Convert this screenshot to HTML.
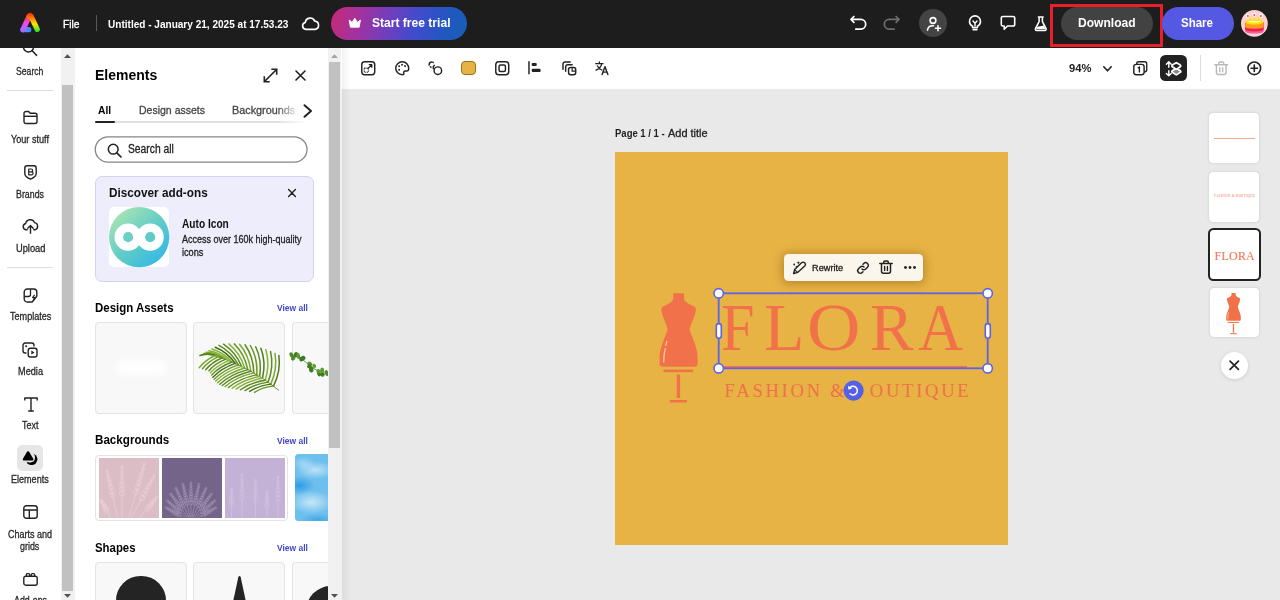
<!DOCTYPE html>
<html><head><meta charset="utf-8"><title>Adobe Express</title>
<style>
*{box-sizing:border-box;margin:0;padding:0}
html,body{width:1280px;height:600px;overflow:hidden;background:#e9e9e9;font-family:"Liberation Sans",sans-serif;color:#222}
.a{position:absolute}
.tx{position:absolute;white-space:nowrap;transform-origin:0 0;display:block}
svg{position:absolute;overflow:visible}
</style></head><body>
<!-- HEADER -->
<div class="a" style="left:0;top:0;width:1280px;height:47.500px;background:#1d1d1d"></div>
<svg style="left:14px;top:6px" width="32" height="32" viewBox="14 6 32 32">
  <defs>
    <linearGradient id="lgL" gradientUnits="userSpaceOnUse" x1="0" y1="31" x2="0" y2="13"><stop offset="0" stop-color="#9a6bff"/><stop offset="0.45" stop-color="#f548f0"/><stop offset="0.8" stop-color="#ff3a3a"/><stop offset="1" stop-color="#ff2200"/></linearGradient>
    <linearGradient id="lgR" gradientUnits="userSpaceOnUse" x1="0" y1="13" x2="0" y2="32"><stop offset="0" stop-color="#ff2200"/><stop offset="0.3" stop-color="#ff8a00"/><stop offset="0.58" stop-color="#ffe600"/><stop offset="0.82" stop-color="#7ae621"/><stop offset="1" stop-color="#22e03a"/></linearGradient>
    <linearGradient id="lgB" gradientUnits="userSpaceOnUse" x1="20" y1="0" x2="31.500" y2="0"><stop offset="0" stop-color="#9a6bff"/><stop offset="0.6" stop-color="#4f8cff"/><stop offset="1" stop-color="#3d8bff"/></linearGradient>
  </defs>
  <path d="M23 29.700H28.700" fill="none" stroke="url(#lgB)" stroke-width="5.300" stroke-linecap="round"/>
  <path d="M23 29.700L29.200 16.200" fill="none" stroke="url(#lgL)" stroke-width="5.300" stroke-linecap="round"/>
  <path d="M23 29.700L24.200 27.100" fill="none" stroke="#9a6bff" stroke-width="5.300" stroke-linecap="round" opacity=".0"/>
  <path d="M29.200 16.200Q30.100 14.800 31 16.200L37.200 29.400" fill="none" stroke="url(#lgR)" stroke-width="5.300" stroke-linecap="round" stroke-linejoin="round"/>
</svg>
<div class="a" style="left:96px;top:15px;width:1px;height:16px;background:#595959"></div>
<svg style="left:300.800px;top:14.800px" width="19" height="17" viewBox="0 0 20 18"><path d="M5.200 15.200a3.700 3.700 0 0 1-.7-7.300 5.200 5.200 0 0 1 10-1.400 4.400 4.400 0 0 1 .5 8.700z" fill="none" stroke="#fff" stroke-width="1.700" stroke-linejoin="round"/></svg>
<div class="a" style="left:331px;top:6.500px;width:135.500px;height:33.300px;border-radius:17px;background:linear-gradient(105deg,#c82a74 0%,#a232a0 22%,#6a40c0 45%,#3f4ccc 62%,#2356c0 82%,#1660b6 100%)"></div>
<svg style="left:348.300px;top:17.200px" width="13.600" height="11.600" viewBox="0 0 14 12"><path d="M1.200 3.200L4.300 5.600 7 1.200 9.700 5.600 12.800 3.200 11.500 10.500H2.500Z" fill="#fff" stroke="#fff" stroke-width="1" stroke-linejoin="round"/></svg>
<!-- undo/redo -->
<svg style="left:849px;top:14px" width="18" height="18" viewBox="0 0 18 18"><path d="M4.900 2.500L2 5.400 4.900 8.300M2.300 5.400H11.800a4.900 4.900 0 0 1 0 9.800H6.800" fill="none" stroke="#fff" stroke-width="1.700" stroke-linecap="round" stroke-linejoin="round"/></svg>
<svg style="left:882.500px;top:14px" width="18" height="18" viewBox="0 0 18 18"><path d="M13.100 2.500L16 5.400 13.100 8.300M15.700 5.400H6.200a4.900 4.900 0 0 0 0 9.800H11.200" fill="none" stroke="#6e6e6e" stroke-width="1.700" stroke-linecap="round" stroke-linejoin="round"/></svg>
<div class="a" style="left:919px;top:9.200px;width:27.800px;height:27.800px;border-radius:14px;background:#444"></div>
<svg style="left:926px;top:15.500px" width="16" height="16" viewBox="0 0 16 16"><circle cx="7" cy="4.500" r="2.900" fill="none" stroke="#fff" stroke-width="1.600"/><path d="M1.500 14.200c.3-2.800 2.400-4.400 5.200-4.400h.8" fill="none" stroke="#fff" stroke-width="1.600" stroke-linecap="round"/><path d="M12 9.800v5M9.500 12.300h5" stroke="#fff" stroke-width="1.600" stroke-linecap="round"/></svg>
<svg style="left:968px;top:15px" width="14" height="16" viewBox="0 0 14 16"><path d="M4.600 11.200C2.800 10.200 1.500 8.600 1.500 6.400a5.500 5.500 0 0 1 11 0c0 2.200-1.300 3.800-3.100 4.800v1.600H4.600z" fill="none" stroke="#fff" stroke-width="1.600" stroke-linejoin="round"/><path d="M5 14.700h4M5 6l2 2.200L9 6M7 8.200v3" fill="none" stroke="#fff" stroke-width="1.400" stroke-linecap="round" stroke-linejoin="round"/></svg>
<svg style="left:1000px;top:14.800px" width="16" height="16" viewBox="0 0 16 16"><path d="M2.800 1.500h10.400a1.500 1.500 0 0 1 1.500 1.500v6.500a1.500 1.500 0 0 1-1.500 1.500H7.500L4.200 14.300V11H2.800a1.500 1.500 0 0 1-1.500-1.500V3a1.500 1.500 0 0 1 1.500-1.500z" fill="none" stroke="#fff" stroke-width="1.600" stroke-linejoin="round"/></svg>
<svg style="left:1034.300px;top:15.500px" width="13.500" height="15.400" viewBox="0 0 14 16"><path d="M4.500 1h5M5.300 1.300v4.500L1.500 13.200c-.4.900.2 1.800 1.100 1.800h8.800c.9 0 1.500-.9 1.100-1.800L8.700 5.800V1.300" fill="none" stroke="#fff" stroke-width="1.600" stroke-linecap="round" stroke-linejoin="round"/><path d="M3.600 11.300l6.600-1.400 1.600 3.900H2.200z" fill="#fff"/></svg>
<!-- download / share -->
<div class="a" style="left:1050px;top:3.500px;width:112.500px;height:43px;border:3px solid #e6202a"></div>
<div class="a" style="left:1061px;top:7px;width:92px;height:33px;border-radius:17px;background:#424242"></div>
<div class="a" style="left:1162px;top:7px;width:72px;height:33px;border-radius:17px;background:#5558e3"></div>
<svg style="left:1240.800px;top:9.900px" width="26.800" height="26.800" viewBox="0 0 26.800 26.800">
  <defs><clipPath id="av"><circle cx="13.400" cy="13.400" r="13.400"/></clipPath></defs>
  <g clip-path="url(#av)"><rect width="27" height="27" fill="#ffd0d0"/>
  <path d="M4.200 12v9.200q0 2.300 9.200 2.300t9.200-2.300V12z" fill="#f95fa0"/>
  <path d="M4.200 12v7.300q0 2.200 9.200 2.200t9.200-2.200V12z" fill="#ef2050"/>
  <path d="M4.200 12v4.600q0 2.200 9.200 2.200t9.200-2.200V12z" fill="#ff9a1f"/>
  <ellipse cx="13.400" cy="12" rx="9.200" ry="2.800" fill="#ffdf10"/>
  <ellipse cx="13.400" cy="11.600" rx="6.500" ry="1" fill="#fff8b0"/>
  <rect x="8.300" y="6" width="1.500" height="5" rx=".700" fill="#ffdf10"/><rect x="12.600" y="6" width="1.500" height="5" rx=".700" fill="#ffdf10"/><rect x="17" y="6" width="1.500" height="5" rx=".700" fill="#ffdf10"/>
  <circle cx="6.700" cy="5.800" r="2" fill="#fff"/><circle cx="13.300" cy="4.800" r="2" fill="#fff"/><circle cx="20" cy="5.800" r="2" fill="#fff"/>
  <circle cx="6.900" cy="5.900" r="1" fill="#f03878"/><circle cx="13.300" cy="4.900" r="1" fill="#f03878"/><circle cx="19.800" cy="5.900" r="1" fill="#f03878"/></g>
</svg>
<!-- RAIL -->
<div class="a" style="left:0;top:48px;width:61px;height:552px;background:#fff"></div>
<div class="a" style="left:7px;top:90px;width:46px;height:1px;background:#dcdcdc"></div>
<div class="a" style="left:7px;top:266.500px;width:46px;height:1px;background:#dcdcdc"></div>
<div class="a" style="left:17px;top:445px;width:26px;height:26px;border-radius:5.500px;background:#e6e6e6"></div>
<!-- rail icons -->
<div class="a" style="left:0;top:47.500px;width:61px;height:20px;overflow:hidden"><svg style="left:22px;top:-8px" width="16" height="18" viewBox="0 0 16 18"><circle cx="6.500" cy="7" r="5" fill="none" stroke="#222" stroke-width="1.500"/><path d="M10.200 10.800L14.500 15.300" stroke="#222" stroke-width="1.600" stroke-linecap="round"/></svg></div>
<svg style="left:23px;top:110px" width="15" height="15" viewBox="0 0 15 15"><path d="M1 3.500a2 2 0 0 1 2-2h2.600l1.600 1.800H12a2 2 0 0 1 2 2v6.200a2 2 0 0 1-2 2H3a2 2 0 0 1-2-2z" fill="none" stroke="#222" stroke-width="1.400" stroke-linejoin="round"/><path d="M1 6.300h13" stroke="#222" stroke-width="1.400"/></svg>
<svg style="left:23.500px;top:165px" width="13" height="15" viewBox="0 0 13 15"><path d="M3 .800h7a2.200 2.200 0 0 1 2.200 2.200v5.600c0 2.700-2.400 4.300-5.700 5.600C3.200 12.900.800 11.300.800 8.600V3A2.200 2.200 0 0 1 3 .800z" fill="none" stroke="#222" stroke-width="1.400" stroke-linejoin="round"/><path d="M4.700 4h2.500a1.400 1.400 0 0 1 0 2.800H4.700zM4.700 6.800h2.900a1.500 1.500 0 0 1 0 3H4.700z" fill="none" stroke="#222" stroke-width="1.200" stroke-linejoin="round"/></svg>
<svg style="left:22px;top:219px" width="17" height="15" viewBox="0 0 17 15"><path d="M5.200 10.800H4.200A3.200 3.200 0 0 1 3.700 4.500 4.600 4.600 0 0 1 12.500 3.600 3.700 3.700 0 0 1 13 10.800H11.800" fill="none" stroke="#222" stroke-width="1.400" stroke-linecap="round" stroke-linejoin="round"/><path d="M8.500 14.200V6.800M5.800 9.200L8.500 6.500 11.200 9.200" fill="none" stroke="#222" stroke-width="1.400" stroke-linecap="round" stroke-linejoin="round"/></svg>
<svg style="left:22.500px;top:287.500px" width="15" height="15" viewBox="0 0 15 15"><path d="M4.200 1h6.600a3 3 0 0 1 3 3v4.200L9.200 14H4.200a3 3 0 0 1-3-3V4a3 3 0 0 1 3-3z" fill="none" stroke="#222" stroke-width="1.400" stroke-linejoin="round"/><path d="M1.300 8.500h4.200a2 2 0 0 0 2-2V1.200" fill="none" stroke="#222" stroke-width="1.300"/><path d="M11.600 6.800l-2 2.800h2.200l-1.600 3" fill="none" stroke="#222" stroke-width="1.200" stroke-linejoin="round"/></svg>
<svg style="left:22px;top:341.500px" width="16" height="16" viewBox="0 0 16 16"><path d="M4 11H3.200A2.200 2.200 0 0 1 1 8.800V3.200A2.200 2.200 0 0 1 3.200 1h6.600A2.200 2.200 0 0 1 12 3.200V4" fill="none" stroke="#222" stroke-width="1.400" stroke-linecap="round"/><circle cx="4.200" cy="4.200" r="1" fill="#222"/><rect x="6.200" y="6.200" width="8.800" height="8.800" rx="2.200" fill="#fff" stroke="#222" stroke-width="1.400"/><path d="M9.300 8.600v4l3.200-2z" fill="#222"/></svg>
<svg style="left:23.500px;top:396.500px" width="14" height="15" viewBox="0 0 14 15"><path d="M.800 3.500V1h12.400v2.500M7 1v13M4.200 14h5.600" fill="none" stroke="#222" stroke-width="1.400" stroke-linejoin="round"/></svg>
<svg style="left:17px;top:445px" width="26" height="26" viewBox="17 445 26 26"><circle cx="31.600" cy="459.300" r="5.800" fill="#000"/><circle cx="29.700" cy="457.200" r="5.300" fill="#e6e6e6"/><path d="M28.100 452.400L24 459.400H32.200Z" fill="#e6e6e6" stroke="#e6e6e6" stroke-width="4.800" stroke-linejoin="round"/><path d="M28.100 452.400L24 459.400H32.200Z" fill="#000" stroke="#000" stroke-width="2.400" stroke-linejoin="round"/></svg>
<svg style="left:23px;top:505px" width="15" height="14" viewBox="0 0 15 14"><rect x=".800" y=".700" width="13.400" height="12.600" rx="2.600" fill="none" stroke="#222" stroke-width="1.400"/><path d="M.800 5h13.400M6.300 5v8.300" stroke="#222" stroke-width="1.400"/></svg>
<svg style="left:23px;top:573px" width="15" height="13" viewBox="0 0 15 13"><path d="M2.800 3.200h9.400a2 2 0 0 1 2 2v5a2 2 0 0 1-2 2H2.800a2 2 0 0 1-2-2v-5a2 2 0 0 1 2-2z" fill="none" stroke="#222" stroke-width="1.400"/><path d="M3.300 3V1.700a1 1 0 0 1 1-1h1.400a1 1 0 0 1 1 1V3M8.300 3V1.700a1 1 0 0 1 1-1h1.400a1 1 0 0 1 1 1V3" fill="none" stroke="#222" stroke-width="1.300"/></svg>
<!-- rail scrollbar -->
<div class="a" style="left:61px;top:48px;width:13.500px;height:552px;background:#f1f1f1"></div>
<div class="a" style="left:62px;top:85px;width:11px;height:506px;background:#c1c1c1"></div>
<svg style="left:64px;top:54px" width="7" height="4" viewBox="0 0 7 4"><path d="M0 4L3.500 .300 7 4z" fill="#505050"/></svg>
<svg style="left:64px;top:593.500px" width="7" height="4" viewBox="0 0 7 4"><path d="M0 0L3.500 3.700 7 0z" fill="#505050"/></svg>
<!-- PANEL -->
<div class="a" style="left:74.500px;top:47.500px;width:254px;height:553px;background:#fff"></div>
<svg style="left:263px;top:67.500px" width="15" height="15" viewBox="0 0 15 15"><path d="M1.500 13.500L13.500 1.500M8.300 1.300h5.400v5.400M6.700 13.700H1.300V8.300" fill="none" stroke="#222" stroke-width="1.600" stroke-linejoin="miter"/></svg>
<svg style="left:295px;top:70px" width="11" height="11" viewBox="0 0 11 11"><path d="M1 1l9 9M10 1l-9 9" stroke="#222" stroke-width="1.600" stroke-linecap="round"/></svg>
<div class="a" style="left:95px;top:121.300px;width:212px;height:2px;background:linear-gradient(90deg,#e0e0e0 0%,#e0e0e0 85%,rgba(224,224,224,0) 100%)"></div>
<div class="a" style="left:94.700px;top:120.800px;width:20px;height:2.200px;background:#222;border-radius:1px"></div>
<div class="a" style="left:276px;top:100px;width:26px;height:20px;z-index:3;background:linear-gradient(90deg,rgba(255,255,255,0),rgba(255,255,255,.95) 85%)"></div>
<svg style="left:303px;top:104px" width="10" height="14" viewBox="0 0 10 14"><path d="M1.500 1.200L8 7 1.500 12.800" fill="none" stroke="#222" stroke-width="2" stroke-linecap="round" stroke-linejoin="round"/></svg>
<svg style="left:0;top:0" width="340" height="200" viewBox="0 0 340 200"><rect x="95.300" y="136.800" width="211.700" height="25.300" rx="12.650" fill="#fff" stroke="#858585" stroke-width="1.300"/></svg>
<svg style="left:107px;top:142.500px" width="15" height="15" viewBox="0 0 15 15"><circle cx="6.200" cy="6.200" r="4.900" fill="none" stroke="#222" stroke-width="1.500"/><path d="M9.800 9.800L14 14" stroke="#222" stroke-width="1.700" stroke-linecap="round"/></svg>
<!-- discover card -->
<div class="a" style="left:94.800px;top:176px;width:219.500px;height:105.500px;border:1px solid #d3d3fa;border-radius:7px;background:#ededfc"></div>
<svg style="left:288px;top:188.500px" width="8" height="8" viewBox="0 0 8 8"><path d="M.600 .600l6.800 6.800M7.400 .600L.600 7.400" stroke="#222" stroke-width="1.400" stroke-linecap="round"/></svg>
<div class="a" style="left:108.700px;top:207.200px;width:60.300px;height:60.300px;border-radius:5px;background:#fff"></div>
<svg style="left:108.700px;top:207.200px" width="60.300" height="60.300" viewBox="0 0 60 60">
  <defs><linearGradient id="ai" x1="0.150" y1="0.100" x2="0.850" y2="0.900"><stop offset="0" stop-color="#a6e3b4"/><stop offset="0.5" stop-color="#63cdc6"/><stop offset="1" stop-color="#35b9e4"/></linearGradient></defs>
  <circle cx="30" cy="30" r="30" fill="url(#ai)"/>
  <circle cx="19" cy="30" r="13.500" fill="#fff"/><circle cx="41" cy="30" r="13.500" fill="#fff"/>
  <circle cx="19" cy="30" r="5" fill="#6dd0c4"/><circle cx="41" cy="30" r="5" fill="#5ecbc8"/>
</svg>
<!-- design assets -->
<div class="a" style="left:94.800px;top:322px;width:92px;height:91.500px;border:1px solid #e3e3e3;border-radius:4px;background:#f8f8f8"></div>
<div class="a" style="left:116px;top:361px;width:50px;height:13px;border-radius:6px;background:#fff;filter:blur(3px);opacity:.9"></div>
<div class="a" style="left:193.300px;top:322px;width:91.600px;height:91.500px;border:1px solid #e3e3e3;border-radius:4px;background:#f8f8f8"></div>
<div class="a" style="left:291.500px;top:322px;width:37px;height:91.500px;border:1px solid #e3e3e3;border-right:none;border-radius:4px 0 0 4px;background:#f8f8f8"></div>
<svg style="left:0;top:0" width="340" height="600" viewBox="0 0 340 600">
<path d="M279.0 390.5 Q252 368 215 355.5" fill="none" stroke="#7a9a2a" stroke-width="1"/>
<path d="M273.5 386.1 Q281.0 370.8 278.9 355.6" fill="none" stroke="#4f7d1a" stroke-width="1.500" stroke-linecap="round"/>
<path d="M273.5 386.1 Q262.5 387.1 254.5 392.3" fill="none" stroke="#6b9a24" stroke-width="1.400" stroke-linecap="round"/>
<path d="M270.8 384.1 Q277.7 368.6 275.0 353.6" fill="none" stroke="#7aa82e" stroke-width="1.500" stroke-linecap="round"/>
<path d="M270.8 384.1 Q258.6 385.5 249.7 391.4" fill="none" stroke="#3f6d14" stroke-width="1.400" stroke-linecap="round"/>
<path d="M268.1 382.1 Q274.0 366.4 270.6 351.6" fill="none" stroke="#5b8a1f" stroke-width="1.500" stroke-linecap="round"/>
<path d="M268.1 382.1 Q254.7 383.9 245.0 390.6" fill="none" stroke="#5b8a1f" stroke-width="1.400" stroke-linecap="round"/>
<path d="M265.3 380.2 Q270.2 364.2 265.8 349.8" fill="none" stroke="#88b23a" stroke-width="1.500" stroke-linecap="round"/>
<path d="M265.3 380.2 Q250.8 382.4 240.4 389.8" fill="none" stroke="#5b8a1f" stroke-width="1.400" stroke-linecap="round"/>
<path d="M262.5 378.3 Q266.2 362.1 260.9 348.2" fill="none" stroke="#4f7d1a" stroke-width="1.500" stroke-linecap="round"/>
<path d="M262.5 378.3 Q247.0 380.9 236.1 389.1" fill="none" stroke="#88b23a" stroke-width="1.400" stroke-linecap="round"/>
<path d="M259.7 376.5 Q262.1 360.2 255.7 346.8" fill="none" stroke="#5b8a1f" stroke-width="1.500" stroke-linecap="round"/>
<path d="M259.7 376.5 Q243.4 379.5 232.1 388.3" fill="none" stroke="#88b23a" stroke-width="1.400" stroke-linecap="round"/>
<path d="M256.8 374.7 Q257.8 358.4 250.4 345.6" fill="none" stroke="#6b9a24" stroke-width="1.500" stroke-linecap="round"/>
<path d="M256.8 374.7 Q240.0 378.2 228.4 387.5" fill="none" stroke="#5b8a1f" stroke-width="1.400" stroke-linecap="round"/>
<path d="M253.8 372.9 Q253.5 356.7 245.0 344.8" fill="none" stroke="#5b8a1f" stroke-width="1.500" stroke-linecap="round"/>
<path d="M253.8 372.9 Q236.8 376.8 225.1 386.6" fill="none" stroke="#7aa82e" stroke-width="1.400" stroke-linecap="round"/>
<path d="M250.8 371.2 Q249.0 355.2 239.6 344.2" fill="none" stroke="#7aa82e" stroke-width="1.500" stroke-linecap="round"/>
<path d="M250.8 371.2 Q233.8 375.4 222.2 385.5" fill="none" stroke="#5b8a1f" stroke-width="1.400" stroke-linecap="round"/>
<path d="M247.8 369.6 Q244.5 353.9 234.2 343.9" fill="none" stroke="#6b9a24" stroke-width="1.500" stroke-linecap="round"/>
<path d="M247.8 369.6 Q230.9 374.1 219.7 384.2" fill="none" stroke="#5b8a1f" stroke-width="1.400" stroke-linecap="round"/>
<path d="M244.7 368.0 Q240.0 352.8 228.8 343.9" fill="none" stroke="#88b23a" stroke-width="1.500" stroke-linecap="round"/>
<path d="M244.7 368.0 Q228.3 372.7 217.5 382.8" fill="none" stroke="#7aa82e" stroke-width="1.400" stroke-linecap="round"/>
<path d="M241.6 366.4 Q235.4 351.9 223.5 344.2" fill="none" stroke="#5b8a1f" stroke-width="1.500" stroke-linecap="round"/>
<path d="M241.6 366.4 Q225.9 371.2 215.7 381.1" fill="none" stroke="#88b23a" stroke-width="1.400" stroke-linecap="round"/>
<path d="M238.4 364.9 Q231.1 351.6 219.0 345.4" fill="none" stroke="#5b8a1f" stroke-width="1.500" stroke-linecap="round"/>
<path d="M238.4 364.9 Q223.7 369.7 214.1 379.3" fill="none" stroke="#6b9a24" stroke-width="1.400" stroke-linecap="round"/>
<path d="M235.2 363.4 Q227.1 351.8 215.2 347.2" fill="none" stroke="#3f6d14" stroke-width="1.500" stroke-linecap="round"/>
<path d="M235.2 363.4 Q221.5 368.2 212.8 377.3" fill="none" stroke="#3f6d14" stroke-width="1.400" stroke-linecap="round"/>
<path d="M232.0 362.0 Q223.3 352.1 211.8 349.0" fill="none" stroke="#88b23a" stroke-width="1.500" stroke-linecap="round"/>
<path d="M232.0 362.0 Q219.4 366.6 211.6 375.1" fill="none" stroke="#5b8a1f" stroke-width="1.400" stroke-linecap="round"/>
<path d="M228.7 360.6 Q219.7 352.4 208.8 350.7" fill="none" stroke="#88b23a" stroke-width="1.500" stroke-linecap="round"/>
<path d="M228.7 360.6 Q217.4 365.0 210.4 372.8" fill="none" stroke="#88b23a" stroke-width="1.400" stroke-linecap="round"/>
<path d="M225.3 359.3 Q216.3 352.7 206.2 352.3" fill="none" stroke="#7aa82e" stroke-width="1.500" stroke-linecap="round"/>
<path d="M225.3 359.3 Q215.1 363.4 208.9 370.7" fill="none" stroke="#5b8a1f" stroke-width="1.400" stroke-linecap="round"/>
<path d="M221.9 358.0 Q213.0 352.9 203.9 353.6" fill="none" stroke="#6b9a24" stroke-width="1.500" stroke-linecap="round"/>
<path d="M221.9 358.0 Q211.8 362.3 205.7 369.7" fill="none" stroke="#5b8a1f" stroke-width="1.400" stroke-linecap="round"/>
<path d="M218.5 356.7 Q210.0 353.1 201.8 354.7" fill="none" stroke="#88b23a" stroke-width="1.500" stroke-linecap="round"/>
<path d="M218.5 356.7 Q208.5 361.2 202.5 368.7" fill="none" stroke="#6b9a24" stroke-width="1.400" stroke-linecap="round"/>
<path d="M215.0 355.5 Q207.1 353.2 200.0 355.5" fill="none" stroke="#4f7d1a" stroke-width="1.500" stroke-linecap="round"/>
<path d="M215.0 355.5 Q205.1 360.2 199.2 367.8" fill="none" stroke="#7aa82e" stroke-width="1.400" stroke-linecap="round"/>
</svg>
<svg style="left:0;top:0" width="328.500" height="600" viewBox="0 0 328.500 600">
<path d="M293 357 L298 356 L303 360 L308 364 L313 368 L318 371 L323 372 L328 372" fill="none" stroke="#4d7d2a" stroke-width=".800"/>
<ellipse cx="291.6" cy="355.1" rx="1.9" ry="3.0" fill="#4f8a2c" transform="rotate(-27 291.6 355.1)"/>
<ellipse cx="293.3" cy="358.0" rx="2.0" ry="2.7" fill="#4f8a2c" transform="rotate(32 293.3 358.0)"/>
<ellipse cx="296.2" cy="354.6" rx="2.3" ry="2.5" fill="#3f7a24" transform="rotate(19 296.2 354.6)"/>
<ellipse cx="298.3" cy="356.0" rx="1.9" ry="3.0" fill="#5f9a34" transform="rotate(-9 298.3 356.0)"/>
<ellipse cx="301.3" cy="359.2" rx="2.1" ry="2.4" fill="#3f7a24" transform="rotate(-4 301.3 359.2)"/>
<ellipse cx="303.4" cy="357.9" rx="2.1" ry="2.2" fill="#3f7a24" transform="rotate(-21 303.4 357.9)"/>
<ellipse cx="309.7" cy="363.8" rx="2.6" ry="2.1" fill="#5f9a34" transform="rotate(33 309.7 363.8)"/>
<ellipse cx="309.2" cy="366.0" rx="1.9" ry="2.4" fill="#3f7a24" transform="rotate(34 309.2 366.0)"/>
<ellipse cx="314.2" cy="365.9" rx="1.7" ry="2.3" fill="#5f9a34" transform="rotate(-32 314.2 365.9)"/>
<ellipse cx="311.2" cy="369.4" rx="2.2" ry="3.2" fill="#3f7a24" transform="rotate(-4 311.2 369.4)"/>
<ellipse cx="318.9" cy="373.4" rx="1.9" ry="3.1" fill="#3f7a24" transform="rotate(-19 318.9 373.4)"/>
<ellipse cx="318.4" cy="371.2" rx="1.8" ry="2.3" fill="#5f9a34" transform="rotate(-9 318.4 371.2)"/>
<ellipse cx="322.6" cy="374.5" rx="2.1" ry="2.2" fill="#3f7a24" transform="rotate(30 322.6 374.5)"/>
<ellipse cx="322.1" cy="370.3" rx="2.0" ry="2.7" fill="#5f9a34" transform="rotate(13 322.1 370.3)"/>
<ellipse cx="329.9" cy="373.3" rx="2.0" ry="2.3" fill="#4f8a2c" transform="rotate(-18 329.9 373.3)"/>
<ellipse cx="326.6" cy="373.1" rx="1.6" ry="3.0" fill="#4f8a2c" transform="rotate(-7 326.6 373.1)"/>
</svg>
<!-- backgrounds -->
<div class="a" style="left:94.800px;top:454.700px;width:193.400px;height:66px;border:1px solid #e3e3e3;border-radius:4px;background:#fff"></div>
<div class="a" style="left:98.500px;top:458px;width:60.200px;height:59.500px;background:#dbbec5"></div>
<div class="a" style="left:161.500px;top:458px;width:60.200px;height:59.500px;background:#75648a"></div>
<div class="a" style="left:224.700px;top:458px;width:60.200px;height:59.500px;background:#c4b2d6"></div>
<svg style="left:0;top:0" width="340" height="600" viewBox="0 0 340 600">
<defs><clipPath id="c1"><rect x="98.500" y="458" width="60.200" height="59.500"/></clipPath><clipPath id="c2"><rect x="161.500" y="458" width="60.200" height="59.500"/></clipPath><clipPath id="c3"><rect x="224.700" y="458" width="60.200" height="59.500"/></clipPath></defs>
<g clip-path="url(#c1)">
<path d="M118.0 520.0 L107.0 471.0" stroke="#ecd5da" stroke-width=".700" opacity="0.9"/><circle cx="107.0" cy="471.0" r="1.3" fill="none" stroke="#ecd5da" stroke-width=".600" opacity="0.9"/><circle cx="107.9" cy="475.1" r="1.5" fill="none" stroke="#ecd5da" stroke-width=".600" opacity="0.9"/><circle cx="108.8" cy="479.2" r="1.8" fill="none" stroke="#ecd5da" stroke-width=".600" opacity="0.9"/><circle cx="109.8" cy="483.2" r="2.0" fill="none" stroke="#ecd5da" stroke-width=".600" opacity="0.9"/><circle cx="110.7" cy="487.3" r="2.2" fill="none" stroke="#ecd5da" stroke-width=".600" opacity="0.9"/><circle cx="111.6" cy="491.4" r="2.4" fill="none" stroke="#ecd5da" stroke-width=".600" opacity="0.9"/><circle cx="112.5" cy="495.5" r="2.6" fill="none" stroke="#ecd5da" stroke-width=".600" opacity="0.9"/>
<path d="M122.0 520.0 L122.0 467.0" stroke="#ecd5da" stroke-width=".700" opacity="0.9"/><circle cx="122.0" cy="467.0" r="1.3" fill="none" stroke="#ecd5da" stroke-width=".600" opacity="0.9"/><circle cx="122.0" cy="471.4" r="1.5" fill="none" stroke="#ecd5da" stroke-width=".600" opacity="0.9"/><circle cx="122.0" cy="475.8" r="1.8" fill="none" stroke="#ecd5da" stroke-width=".600" opacity="0.9"/><circle cx="122.0" cy="480.2" r="2.0" fill="none" stroke="#ecd5da" stroke-width=".600" opacity="0.9"/><circle cx="122.0" cy="484.7" r="2.2" fill="none" stroke="#ecd5da" stroke-width=".600" opacity="0.9"/><circle cx="122.0" cy="489.1" r="2.4" fill="none" stroke="#ecd5da" stroke-width=".600" opacity="0.9"/><circle cx="122.0" cy="493.5" r="2.6" fill="none" stroke="#ecd5da" stroke-width=".600" opacity="0.9"/>
<path d="M128.0 520.0 L144.5 464.0" stroke="#ecd5da" stroke-width=".700" opacity="0.9"/><circle cx="144.5" cy="464.0" r="1.3" fill="none" stroke="#ecd5da" stroke-width=".600" opacity="0.9"/><circle cx="143.1" cy="468.7" r="1.5" fill="none" stroke="#ecd5da" stroke-width=".600" opacity="0.9"/><circle cx="141.8" cy="473.3" r="1.8" fill="none" stroke="#ecd5da" stroke-width=".600" opacity="0.9"/><circle cx="140.4" cy="478.0" r="2.0" fill="none" stroke="#ecd5da" stroke-width=".600" opacity="0.9"/><circle cx="139.0" cy="482.7" r="2.2" fill="none" stroke="#ecd5da" stroke-width=".600" opacity="0.9"/><circle cx="137.6" cy="487.3" r="2.4" fill="none" stroke="#ecd5da" stroke-width=".600" opacity="0.9"/><circle cx="136.2" cy="492.0" r="2.6" fill="none" stroke="#ecd5da" stroke-width=".600" opacity="0.9"/>
<path d="M130.0 520.0 L154.0 476.0" stroke="#ecd5da" stroke-width=".700" opacity="0.9"/><circle cx="154.0" cy="476.0" r="1.3" fill="none" stroke="#ecd5da" stroke-width=".600" opacity="0.9"/><circle cx="152.0" cy="479.7" r="1.5" fill="none" stroke="#ecd5da" stroke-width=".600" opacity="0.9"/><circle cx="150.0" cy="483.3" r="1.8" fill="none" stroke="#ecd5da" stroke-width=".600" opacity="0.9"/><circle cx="148.0" cy="487.0" r="2.0" fill="none" stroke="#ecd5da" stroke-width=".600" opacity="0.9"/><circle cx="146.0" cy="490.7" r="2.2" fill="none" stroke="#ecd5da" stroke-width=".600" opacity="0.9"/><circle cx="144.0" cy="494.3" r="2.4" fill="none" stroke="#ecd5da" stroke-width=".600" opacity="0.9"/><circle cx="142.0" cy="498.0" r="2.6" fill="none" stroke="#ecd5da" stroke-width=".600" opacity="0.9"/>
<path d="M112.0 520.0 L101.0 500.0" stroke="#ecd5da" stroke-width=".700" opacity="0.9"/><circle cx="101.0" cy="500.0" r="1.3" fill="none" stroke="#ecd5da" stroke-width=".600" opacity="0.9"/><circle cx="101.9" cy="501.7" r="1.5" fill="none" stroke="#ecd5da" stroke-width=".600" opacity="0.9"/><circle cx="102.8" cy="503.3" r="1.8" fill="none" stroke="#ecd5da" stroke-width=".600" opacity="0.9"/><circle cx="103.8" cy="505.0" r="2.0" fill="none" stroke="#ecd5da" stroke-width=".600" opacity="0.9"/><circle cx="104.7" cy="506.7" r="2.2" fill="none" stroke="#ecd5da" stroke-width=".600" opacity="0.9"/><circle cx="105.6" cy="508.3" r="2.4" fill="none" stroke="#ecd5da" stroke-width=".600" opacity="0.9"/><circle cx="106.5" cy="510.0" r="2.6" fill="none" stroke="#ecd5da" stroke-width=".600" opacity="0.9"/>
<path d="M138.0 520.0 L157.0 497.0" stroke="#ecd5da" stroke-width=".700" opacity="0.9"/><circle cx="157.0" cy="497.0" r="1.3" fill="none" stroke="#ecd5da" stroke-width=".600" opacity="0.9"/><circle cx="155.4" cy="498.9" r="1.5" fill="none" stroke="#ecd5da" stroke-width=".600" opacity="0.9"/><circle cx="153.8" cy="500.8" r="1.8" fill="none" stroke="#ecd5da" stroke-width=".600" opacity="0.9"/><circle cx="152.2" cy="502.8" r="2.0" fill="none" stroke="#ecd5da" stroke-width=".600" opacity="0.9"/><circle cx="150.7" cy="504.7" r="2.2" fill="none" stroke="#ecd5da" stroke-width=".600" opacity="0.9"/><circle cx="149.1" cy="506.6" r="2.4" fill="none" stroke="#ecd5da" stroke-width=".600" opacity="0.9"/><circle cx="147.5" cy="508.5" r="2.6" fill="none" stroke="#ecd5da" stroke-width=".600" opacity="0.9"/>
</g><g clip-path="url(#c2)">
<path d="M191.0 522.0 L166.2 507.7" stroke="#a99bb8" stroke-width=".700" opacity="0.85"/><circle cx="166.2" cy="507.7" r="1.1" fill="none" stroke="#a99bb8" stroke-width=".600" opacity="0.85"/><circle cx="168.0" cy="508.7" r="1.2" fill="none" stroke="#a99bb8" stroke-width=".600" opacity="0.85"/><circle cx="169.8" cy="509.7" r="1.4" fill="none" stroke="#a99bb8" stroke-width=".600" opacity="0.85"/><circle cx="171.5" cy="510.8" r="1.5" fill="none" stroke="#a99bb8" stroke-width=".600" opacity="0.85"/><circle cx="173.3" cy="511.8" r="1.7" fill="none" stroke="#a99bb8" stroke-width=".600" opacity="0.85"/><circle cx="175.1" cy="512.8" r="1.9" fill="none" stroke="#a99bb8" stroke-width=".600" opacity="0.85"/><circle cx="176.8" cy="513.8" r="2.0" fill="none" stroke="#a99bb8" stroke-width=".600" opacity="0.85"/><circle cx="178.6" cy="514.9" r="2.2" fill="none" stroke="#a99bb8" stroke-width=".600" opacity="0.85"/>
<path d="M191.0 522.0 L167.4 500.7" stroke="#a99bb8" stroke-width=".700" opacity="0.85"/><circle cx="167.4" cy="500.7" r="1.1" fill="none" stroke="#a99bb8" stroke-width=".600" opacity="0.85"/><circle cx="169.0" cy="502.2" r="1.2" fill="none" stroke="#a99bb8" stroke-width=".600" opacity="0.85"/><circle cx="170.7" cy="503.8" r="1.4" fill="none" stroke="#a99bb8" stroke-width=".600" opacity="0.85"/><circle cx="172.4" cy="505.3" r="1.5" fill="none" stroke="#a99bb8" stroke-width=".600" opacity="0.85"/><circle cx="174.1" cy="506.8" r="1.7" fill="none" stroke="#a99bb8" stroke-width=".600" opacity="0.85"/><circle cx="175.8" cy="508.3" r="1.9" fill="none" stroke="#a99bb8" stroke-width=".600" opacity="0.85"/><circle cx="177.5" cy="509.8" r="2.0" fill="none" stroke="#a99bb8" stroke-width=".600" opacity="0.85"/><circle cx="179.2" cy="511.4" r="2.2" fill="none" stroke="#a99bb8" stroke-width=".600" opacity="0.85"/>
<path d="M191.0 522.0 L170.6 493.9" stroke="#a99bb8" stroke-width=".700" opacity="0.85"/><circle cx="170.6" cy="493.9" r="1.1" fill="none" stroke="#a99bb8" stroke-width=".600" opacity="0.85"/><circle cx="172.1" cy="495.9" r="1.2" fill="none" stroke="#a99bb8" stroke-width=".600" opacity="0.85"/><circle cx="173.5" cy="497.9" r="1.4" fill="none" stroke="#a99bb8" stroke-width=".600" opacity="0.85"/><circle cx="175.0" cy="499.9" r="1.5" fill="none" stroke="#a99bb8" stroke-width=".600" opacity="0.85"/><circle cx="176.4" cy="501.9" r="1.7" fill="none" stroke="#a99bb8" stroke-width=".600" opacity="0.85"/><circle cx="177.9" cy="503.9" r="1.9" fill="none" stroke="#a99bb8" stroke-width=".600" opacity="0.85"/><circle cx="179.3" cy="506.0" r="2.0" fill="none" stroke="#a99bb8" stroke-width=".600" opacity="0.85"/><circle cx="180.8" cy="508.0" r="2.2" fill="none" stroke="#a99bb8" stroke-width=".600" opacity="0.85"/>
<path d="M191.0 522.0 L175.9 488.2" stroke="#a99bb8" stroke-width=".700" opacity="0.85"/><circle cx="175.9" cy="488.2" r="1.1" fill="none" stroke="#a99bb8" stroke-width=".600" opacity="0.85"/><circle cx="177.0" cy="490.6" r="1.2" fill="none" stroke="#a99bb8" stroke-width=".600" opacity="0.85"/><circle cx="178.1" cy="493.0" r="1.4" fill="none" stroke="#a99bb8" stroke-width=".600" opacity="0.85"/><circle cx="179.2" cy="495.4" r="1.5" fill="none" stroke="#a99bb8" stroke-width=".600" opacity="0.85"/><circle cx="180.2" cy="497.8" r="1.7" fill="none" stroke="#a99bb8" stroke-width=".600" opacity="0.85"/><circle cx="181.3" cy="500.3" r="1.9" fill="none" stroke="#a99bb8" stroke-width=".600" opacity="0.85"/><circle cx="182.4" cy="502.7" r="2.0" fill="none" stroke="#a99bb8" stroke-width=".600" opacity="0.85"/><circle cx="183.5" cy="505.1" r="2.2" fill="none" stroke="#a99bb8" stroke-width=".600" opacity="0.85"/>
<path d="M191.0 522.0 L183.0 484.4" stroke="#a99bb8" stroke-width=".700" opacity="0.85"/><circle cx="183.0" cy="484.4" r="1.1" fill="none" stroke="#a99bb8" stroke-width=".600" opacity="0.85"/><circle cx="183.6" cy="487.0" r="1.2" fill="none" stroke="#a99bb8" stroke-width=".600" opacity="0.85"/><circle cx="184.1" cy="489.7" r="1.4" fill="none" stroke="#a99bb8" stroke-width=".600" opacity="0.85"/><circle cx="184.7" cy="492.4" r="1.5" fill="none" stroke="#a99bb8" stroke-width=".600" opacity="0.85"/><circle cx="185.3" cy="495.1" r="1.7" fill="none" stroke="#a99bb8" stroke-width=".600" opacity="0.85"/><circle cx="185.9" cy="497.8" r="1.9" fill="none" stroke="#a99bb8" stroke-width=".600" opacity="0.85"/><circle cx="186.4" cy="500.5" r="2.0" fill="none" stroke="#a99bb8" stroke-width=".600" opacity="0.85"/><circle cx="187.0" cy="503.2" r="2.2" fill="none" stroke="#a99bb8" stroke-width=".600" opacity="0.85"/>
<path d="M191.0 522.0 L191.0 483.0" stroke="#a99bb8" stroke-width=".700" opacity="0.85"/><circle cx="191.0" cy="483.0" r="1.1" fill="none" stroke="#a99bb8" stroke-width=".600" opacity="0.85"/><circle cx="191.0" cy="485.8" r="1.2" fill="none" stroke="#a99bb8" stroke-width=".600" opacity="0.85"/><circle cx="191.0" cy="488.6" r="1.4" fill="none" stroke="#a99bb8" stroke-width=".600" opacity="0.85"/><circle cx="191.0" cy="491.4" r="1.5" fill="none" stroke="#a99bb8" stroke-width=".600" opacity="0.85"/><circle cx="191.0" cy="494.1" r="1.7" fill="none" stroke="#a99bb8" stroke-width=".600" opacity="0.85"/><circle cx="191.0" cy="496.9" r="1.9" fill="none" stroke="#a99bb8" stroke-width=".600" opacity="0.85"/><circle cx="191.0" cy="499.7" r="2.0" fill="none" stroke="#a99bb8" stroke-width=".600" opacity="0.85"/><circle cx="191.0" cy="502.5" r="2.2" fill="none" stroke="#a99bb8" stroke-width=".600" opacity="0.85"/>
<path d="M191.0 522.0 L199.0 484.4" stroke="#a99bb8" stroke-width=".700" opacity="0.85"/><circle cx="199.0" cy="484.4" r="1.1" fill="none" stroke="#a99bb8" stroke-width=".600" opacity="0.85"/><circle cx="198.4" cy="487.0" r="1.2" fill="none" stroke="#a99bb8" stroke-width=".600" opacity="0.85"/><circle cx="197.9" cy="489.7" r="1.4" fill="none" stroke="#a99bb8" stroke-width=".600" opacity="0.85"/><circle cx="197.3" cy="492.4" r="1.5" fill="none" stroke="#a99bb8" stroke-width=".600" opacity="0.85"/><circle cx="196.7" cy="495.1" r="1.7" fill="none" stroke="#a99bb8" stroke-width=".600" opacity="0.85"/><circle cx="196.1" cy="497.8" r="1.9" fill="none" stroke="#a99bb8" stroke-width=".600" opacity="0.85"/><circle cx="195.6" cy="500.5" r="2.0" fill="none" stroke="#a99bb8" stroke-width=".600" opacity="0.85"/><circle cx="195.0" cy="503.2" r="2.2" fill="none" stroke="#a99bb8" stroke-width=".600" opacity="0.85"/>
<path d="M191.0 522.0 L206.1 488.2" stroke="#a99bb8" stroke-width=".700" opacity="0.85"/><circle cx="206.1" cy="488.2" r="1.1" fill="none" stroke="#a99bb8" stroke-width=".600" opacity="0.85"/><circle cx="205.0" cy="490.6" r="1.2" fill="none" stroke="#a99bb8" stroke-width=".600" opacity="0.85"/><circle cx="203.9" cy="493.0" r="1.4" fill="none" stroke="#a99bb8" stroke-width=".600" opacity="0.85"/><circle cx="202.8" cy="495.4" r="1.5" fill="none" stroke="#a99bb8" stroke-width=".600" opacity="0.85"/><circle cx="201.8" cy="497.8" r="1.7" fill="none" stroke="#a99bb8" stroke-width=".600" opacity="0.85"/><circle cx="200.7" cy="500.3" r="1.9" fill="none" stroke="#a99bb8" stroke-width=".600" opacity="0.85"/><circle cx="199.6" cy="502.7" r="2.0" fill="none" stroke="#a99bb8" stroke-width=".600" opacity="0.85"/><circle cx="198.5" cy="505.1" r="2.2" fill="none" stroke="#a99bb8" stroke-width=".600" opacity="0.85"/>
<path d="M191.0 522.0 L211.4 493.9" stroke="#a99bb8" stroke-width=".700" opacity="0.85"/><circle cx="211.4" cy="493.9" r="1.1" fill="none" stroke="#a99bb8" stroke-width=".600" opacity="0.85"/><circle cx="209.9" cy="495.9" r="1.2" fill="none" stroke="#a99bb8" stroke-width=".600" opacity="0.85"/><circle cx="208.5" cy="497.9" r="1.4" fill="none" stroke="#a99bb8" stroke-width=".600" opacity="0.85"/><circle cx="207.0" cy="499.9" r="1.5" fill="none" stroke="#a99bb8" stroke-width=".600" opacity="0.85"/><circle cx="205.6" cy="501.9" r="1.7" fill="none" stroke="#a99bb8" stroke-width=".600" opacity="0.85"/><circle cx="204.1" cy="503.9" r="1.9" fill="none" stroke="#a99bb8" stroke-width=".600" opacity="0.85"/><circle cx="202.7" cy="506.0" r="2.0" fill="none" stroke="#a99bb8" stroke-width=".600" opacity="0.85"/><circle cx="201.2" cy="508.0" r="2.2" fill="none" stroke="#a99bb8" stroke-width=".600" opacity="0.85"/>
<path d="M191.0 522.0 L214.6 500.7" stroke="#a99bb8" stroke-width=".700" opacity="0.85"/><circle cx="214.6" cy="500.7" r="1.1" fill="none" stroke="#a99bb8" stroke-width=".600" opacity="0.85"/><circle cx="213.0" cy="502.2" r="1.2" fill="none" stroke="#a99bb8" stroke-width=".600" opacity="0.85"/><circle cx="211.3" cy="503.8" r="1.4" fill="none" stroke="#a99bb8" stroke-width=".600" opacity="0.85"/><circle cx="209.6" cy="505.3" r="1.5" fill="none" stroke="#a99bb8" stroke-width=".600" opacity="0.85"/><circle cx="207.9" cy="506.8" r="1.7" fill="none" stroke="#a99bb8" stroke-width=".600" opacity="0.85"/><circle cx="206.2" cy="508.3" r="1.9" fill="none" stroke="#a99bb8" stroke-width=".600" opacity="0.85"/><circle cx="204.5" cy="509.8" r="2.0" fill="none" stroke="#a99bb8" stroke-width=".600" opacity="0.85"/><circle cx="202.8" cy="511.4" r="2.2" fill="none" stroke="#a99bb8" stroke-width=".600" opacity="0.85"/>
<path d="M191.0 522.0 L215.8 507.7" stroke="#a99bb8" stroke-width=".700" opacity="0.85"/><circle cx="215.8" cy="507.7" r="1.1" fill="none" stroke="#a99bb8" stroke-width=".600" opacity="0.85"/><circle cx="214.0" cy="508.7" r="1.2" fill="none" stroke="#a99bb8" stroke-width=".600" opacity="0.85"/><circle cx="212.2" cy="509.7" r="1.4" fill="none" stroke="#a99bb8" stroke-width=".600" opacity="0.85"/><circle cx="210.5" cy="510.8" r="1.5" fill="none" stroke="#a99bb8" stroke-width=".600" opacity="0.85"/><circle cx="208.7" cy="511.8" r="1.7" fill="none" stroke="#a99bb8" stroke-width=".600" opacity="0.85"/><circle cx="206.9" cy="512.8" r="1.9" fill="none" stroke="#a99bb8" stroke-width=".600" opacity="0.85"/><circle cx="205.2" cy="513.8" r="2.0" fill="none" stroke="#a99bb8" stroke-width=".600" opacity="0.85"/><circle cx="203.4" cy="514.9" r="2.2" fill="none" stroke="#a99bb8" stroke-width=".600" opacity="0.85"/>
</g><g clip-path="url(#c3)">
<path d="M231.5 520.0 L231.5 489.0" stroke="#d4c6e2" stroke-width=".700" opacity="0.9"/><circle cx="231.5" cy="489.0" r="1.2" fill="none" stroke="#d4c6e2" stroke-width=".600" opacity="0.9"/><circle cx="231.5" cy="492.1" r="1.4" fill="none" stroke="#d4c6e2" stroke-width=".600" opacity="0.9"/><circle cx="231.5" cy="495.2" r="1.7" fill="none" stroke="#d4c6e2" stroke-width=".600" opacity="0.9"/><circle cx="231.5" cy="498.3" r="1.9" fill="none" stroke="#d4c6e2" stroke-width=".600" opacity="0.9"/><circle cx="231.5" cy="501.4" r="2.2" fill="none" stroke="#d4c6e2" stroke-width=".600" opacity="0.9"/><circle cx="231.5" cy="504.5" r="2.4" fill="none" stroke="#d4c6e2" stroke-width=".600" opacity="0.9"/>
<path d="M242.0 520.0 L242.0 475.0" stroke="#d4c6e2" stroke-width=".700" opacity="0.9"/><circle cx="242.0" cy="475.0" r="1.2" fill="none" stroke="#d4c6e2" stroke-width=".600" opacity="0.9"/><circle cx="242.0" cy="479.5" r="1.4" fill="none" stroke="#d4c6e2" stroke-width=".600" opacity="0.9"/><circle cx="242.0" cy="484.0" r="1.7" fill="none" stroke="#d4c6e2" stroke-width=".600" opacity="0.9"/><circle cx="242.0" cy="488.5" r="1.9" fill="none" stroke="#d4c6e2" stroke-width=".600" opacity="0.9"/><circle cx="242.0" cy="493.0" r="2.2" fill="none" stroke="#d4c6e2" stroke-width=".600" opacity="0.9"/><circle cx="242.0" cy="497.5" r="2.4" fill="none" stroke="#d4c6e2" stroke-width=".600" opacity="0.9"/>
<path d="M255.5 520.0 L255.5 480.0" stroke="#d4c6e2" stroke-width=".700" opacity="0.9"/><circle cx="255.5" cy="480.0" r="1.2" fill="none" stroke="#d4c6e2" stroke-width=".600" opacity="0.9"/><circle cx="255.5" cy="484.0" r="1.4" fill="none" stroke="#d4c6e2" stroke-width=".600" opacity="0.9"/><circle cx="255.5" cy="488.0" r="1.7" fill="none" stroke="#d4c6e2" stroke-width=".600" opacity="0.9"/><circle cx="255.5" cy="492.0" r="1.9" fill="none" stroke="#d4c6e2" stroke-width=".600" opacity="0.9"/><circle cx="255.5" cy="496.0" r="2.2" fill="none" stroke="#d4c6e2" stroke-width=".600" opacity="0.9"/><circle cx="255.5" cy="500.0" r="2.4" fill="none" stroke="#d4c6e2" stroke-width=".600" opacity="0.9"/>
<path d="M267.0 520.0 L267.0 492.0" stroke="#d4c6e2" stroke-width=".700" opacity="0.9"/><circle cx="267.0" cy="492.0" r="1.2" fill="none" stroke="#d4c6e2" stroke-width=".600" opacity="0.9"/><circle cx="267.0" cy="494.8" r="1.4" fill="none" stroke="#d4c6e2" stroke-width=".600" opacity="0.9"/><circle cx="267.0" cy="497.6" r="1.7" fill="none" stroke="#d4c6e2" stroke-width=".600" opacity="0.9"/><circle cx="267.0" cy="500.4" r="1.9" fill="none" stroke="#d4c6e2" stroke-width=".600" opacity="0.9"/><circle cx="267.0" cy="503.2" r="2.2" fill="none" stroke="#d4c6e2" stroke-width=".600" opacity="0.9"/><circle cx="267.0" cy="506.0" r="2.4" fill="none" stroke="#d4c6e2" stroke-width=".600" opacity="0.9"/>
<path d="M278.0 520.0 L278.0 477.0" stroke="#d4c6e2" stroke-width=".700" opacity="0.9"/><circle cx="278.0" cy="477.0" r="1.2" fill="none" stroke="#d4c6e2" stroke-width=".600" opacity="0.9"/><circle cx="278.0" cy="481.3" r="1.4" fill="none" stroke="#d4c6e2" stroke-width=".600" opacity="0.9"/><circle cx="278.0" cy="485.6" r="1.7" fill="none" stroke="#d4c6e2" stroke-width=".600" opacity="0.9"/><circle cx="278.0" cy="489.9" r="1.9" fill="none" stroke="#d4c6e2" stroke-width=".600" opacity="0.9"/><circle cx="278.0" cy="494.2" r="2.2" fill="none" stroke="#d4c6e2" stroke-width=".600" opacity="0.9"/><circle cx="278.0" cy="498.5" r="2.4" fill="none" stroke="#d4c6e2" stroke-width=".600" opacity="0.9"/>
</g></svg>
<div class="a" style="left:295px;top:454.400px;width:33px;height:66.300px;border-radius:3.500px 0 0 3.500px;background:radial-gradient(ellipse 20px 9px at 62% 24%,rgba(255,255,255,.55),rgba(255,255,255,0)),radial-gradient(ellipse 12px 7px at 25% 14%,rgba(255,255,255,.35),rgba(255,255,255,0)),radial-gradient(ellipse 22px 12px at 50% 72%,rgba(255,255,255,.62),rgba(255,255,255,0)),radial-gradient(ellipse 16px 9px at 12% 47%,rgba(25,145,225,.75),rgba(25,145,225,0)),radial-gradient(ellipse 18px 6px at 70% 98%,rgba(25,145,225,.5),rgba(25,145,225,0)),#6dbfee"></div>
<!-- shapes -->
<div class="a" style="left:94.800px;top:562.200px;width:92px;height:50px;border:1px solid #e3e3e3;border-radius:4px;background:#f8f8f8"></div>
<div class="a" style="left:193.300px;top:562.200px;width:91.600px;height:50px;border:1px solid #e3e3e3;border-radius:4px;background:#f8f8f8"></div>
<div class="a" style="left:291.500px;top:562.200px;width:37px;height:50px;border:1px solid #e3e3e3;border-right:none;border-radius:4px 0 0 4px;background:#f8f8f8"></div>
<div class="a" style="left:116px;top:575.500px;width:49.600px;height:49.600px;border-radius:25px;background:#242424"></div>
<svg style="left:230px;top:575px" width="20" height="26" viewBox="0 0 20 26"><path d="M8.300 2.200Q9.500 -.300 10.700 2.200L15.800 26H3.200z" fill="#242424"/></svg>
<div class="a" style="left:305.500px;top:586px;width:23px;height:20px;overflow:hidden"><div class="a" style="left:0;top:0;width:50px;height:50px;border-radius:25px;background:#242424"></div></div>
<!-- panel scrollbar -->
<div class="a" style="left:328px;top:47.500px;width:13.500px;height:553px;background:#f1f1f1"></div>
<div class="a" style="left:329px;top:62px;width:10.800px;height:386.300px;background:#c1c1c1"></div>
<svg style="left:331.100px;top:54px" width="7" height="4" viewBox="0 0 7 4"><path d="M0 4L3.500 .300 7 4z" fill="#a3a3a3"/></svg>
<svg style="left:331.100px;top:593.500px" width="7" height="4" viewBox="0 0 7 4"><path d="M0 0L3.500 3.700 7 0z" fill="#505050"/></svg>
<!-- TOOLBAR -->
<div class="a" style="left:341px;top:47.500px;width:939px;height:41.500px;background:#fff"></div>
<div class="a" style="left:341.500px;top:47.500px;width:9px;height:553px;background:linear-gradient(90deg,rgba(0,0,0,.05),rgba(0,0,0,0))"></div>
<svg style="left:361px;top:60.600px" width="14.500" height="14.500" viewBox="0 0 15 15"><rect x=".800" y=".800" width="13.400" height="13.400" rx="3" fill="none" stroke="#222" stroke-width="1.500"/><path d="M7 8L11 4M8 3.800h3.200V7" fill="none" stroke="#222" stroke-width="1.300" stroke-linejoin="round"/><rect x="3.400" y="7.400" width="4.200" height="4.200" fill="none" stroke="#222" stroke-width="1.200" stroke-dasharray="1.300 .900"/></svg>
<svg style="left:394.500px;top:60.600px" width="14.500" height="14.500" viewBox="0 0 15 15"><path d="M7.500 .800a6.700 6.700 0 1 0 0 13.400c1.400 0 1.900-.9 1.600-1.800-.4-1.100.2-2.100 1.400-2.100h1.500c1.300 0 2.200-.9 2.200-2.400C14.200 3.900 11.300 .800 7.500 .800z" fill="none" stroke="#222" stroke-width="1.500"/><circle cx="4.300" cy="5.400" r="1" fill="#222"/><circle cx="7.300" cy="3.800" r="1" fill="#222"/><circle cx="10.400" cy="5.200" r="1" fill="#222"/><circle cx="4.300" cy="9" r="1" fill="#222"/></svg>
<svg style="left:427.500px;top:60.600px" width="14.500" height="14.500" viewBox="0 0 15 15"><circle cx="10.200" cy="10" r="3.900" fill="none" stroke="#222" stroke-width="1.500"/><path d="M5.500 7.800a3 3 0 0 1 1-3.300" fill="none" stroke="#222" stroke-width="1.500" stroke-linecap="round"/><path d="M1.200 4.200a3 3 0 0 1 2.300-3.200" fill="none" stroke="#222" stroke-width="1.500" stroke-linecap="round"/><path d="M4.400 1.200l1 .3M2.500 5.800l.6 .9" stroke="#222" stroke-width="1.400" stroke-linecap="round"/></svg>
<div class="a" style="left:461px;top:60.700px;width:14.600px;height:14.300px;border-radius:4px;background:#e8b345;border:1px solid #96741f"></div>
<svg style="left:494.500px;top:60.600px" width="14.500" height="14.500" viewBox="0 0 15 15"><rect x=".800" y=".800" width="13.400" height="13.400" rx="3.200" fill="none" stroke="#222" stroke-width="1.500"/><rect x="4.200" y="4.200" width="6.600" height="6.600" rx="1.500" fill="none" stroke="#222" stroke-width="1.500"/></svg>
<svg style="left:528px;top:61px" width="13.600" height="13.600" viewBox="0 0 14 14"><path d="M1 .800v12.400" stroke="#222" stroke-width="1.500" stroke-linecap="round"/><rect x="3.800" y="2" width="5.200" height="3.200" rx="1.200" fill="#222"/><rect x="3.800" y="8" width="9.200" height="3.200" rx="1.200" fill="#222"/></svg>
<svg style="left:561.500px;top:60.600px" width="14.500" height="14.500" viewBox="0 0 15 15"><path d="M1 8.500V3.200A2.200 2.200 0 0 1 3.200 1H8.500" fill="none" stroke="#222" stroke-width="1.500" stroke-linecap="round"/><path d="M3.800 10.500V6A2.200 2.200 0 0 1 6 3.800h4.500" fill="none" stroke="#222" stroke-width="1.500" stroke-linecap="round"/><rect x="6.800" y="6.800" width="7.400" height="7.400" rx="2.200" fill="none" stroke="#222" stroke-width="1.500"/><path d="M10.500 6.800v3.700h3.700" fill="none" stroke="#222" stroke-width="1.200"/></svg>
<svg style="left:595px;top:60.600px" width="13.600" height="14.500" viewBox="0 0 14 15"><path d="M.700 2.800h7.600M4.500 1v1.800M7 2.800C6.300 6 4 8.300 1 9.500M2.300 5C3.300 7 5 8.500 7 9.300" fill="none" stroke="#222" stroke-width="1.300" stroke-linecap="round" stroke-linejoin="round"/><path d="M7.300 14l3-8 3 8M8.300 11.500h4" fill="none" stroke="#222" stroke-width="1.500" stroke-linecap="round" stroke-linejoin="round"/></svg>
<!-- right -->
<svg style="left:1103px;top:65.500px" width="9" height="6" viewBox="0 0 9 6"><path d="M.800 .800L4.500 4.800 8.200 .800" fill="none" stroke="#222" stroke-width="1.600" stroke-linecap="round" stroke-linejoin="round"/></svg>
<svg style="left:1132.500px;top:60.600px" width="14.500" height="14.500" viewBox="0 0 15 15"><path d="M3.800 3.500V3A2.200 2.200 0 0 1 6 .800h6A2.200 2.200 0 0 1 14.200 3v6A2.200 2.200 0 0 1 12 11.200h-.5" fill="none" stroke="#222" stroke-width="1.400"/><rect x=".800" y="3.500" width="10.700" height="10.700" rx="2.500" fill="#fff" stroke="#222" stroke-width="1.500"/><path d="M5 7.400l1.600-1v5.600" fill="none" stroke="#222" stroke-width="1.400"/></svg>
<div class="a" style="left:1160.200px;top:54.700px;width:26.600px;height:26.300px;border-radius:5.500px;background:#222"></div>
<svg style="left:1160px;top:54.500px" width="27" height="27" viewBox="0 0 27 27"><g fill="none" stroke="#fff" stroke-width="1.400" stroke-linecap="round" stroke-linejoin="round"><path d="M8.800 7v5.200M6.400 9.200L8.800 6.800 11.200 9.200M8.800 15.800v4.800M6.400 18.400L8.800 20.800 11.200 18.400"/><path d="M16.300 13.300C18 14.300 19.600 14.900 20.500 15.900c.5.500.3 1.100-.3 1.500L16.800 19.600c-.3.200-.7.200-1 0L12.400 17.400c-.6-.4-.8-1-.3-1.500C13 14.900 14.600 14.300 16.300 13.300z" fill="#8c8c8c" stroke-width="1.700"/><path d="M16.300 7.700C18 8.700 19.600 9.300 20.500 10.300c.5.500.3 1.100-.3 1.500L16.800 14c-.3.200-.7.200-1 0L12.400 11.800c-.6-.4-.8-1-.3-1.500C13 9.300 14.600 8.700 16.300 7.700z" fill="#222" stroke-width="1.700"/></g></svg>
<div class="a" style="left:1200px;top:55px;width:1px;height:26px;background:#dedede"></div>
<svg style="left:1213.500px;top:60.600px" width="14.500" height="14.500" viewBox="0 0 15 15"><path d="M.800 3.800h13.400M5 3.500V2.200A1.200 1.200 0 0 1 6.200 1h2.600A1.200 1.200 0 0 1 10 2.200v1.300M2.500 4v8a2 2 0 0 0 2 2h6a2 2 0 0 0 2-2V4" fill="none" stroke="#b9b9b9" stroke-width="1.500" stroke-linecap="round"/><path d="M6 6.800v4.400M9 6.800v4.400" stroke="#b9b9b9" stroke-width="1.400" stroke-linecap="round"/></svg>
<svg style="left:1246.500px;top:61px" width="14.600" height="14.600" viewBox="0 0 15 15"><circle cx="7.500" cy="7.500" r="6.500" fill="none" stroke="#222" stroke-width="1.600"/><path d="M7.500 4.200v6.600M4.200 7.500h6.600" stroke="#222" stroke-width="1.700" stroke-linecap="round"/></svg>

<!-- CANVAS -->
<div class="a" style="left:615px;top:152px;width:392.500px;height:392.500px;background:#e8b345"></div>
<!-- mannequin -->
<svg style="left:650px;top:285px" width="60" height="125" viewBox="0 0 60 125">
  <path d="M23.300 8.300H34V13.500C34.500 17.500 40 19.300 44.200 21.500 46 22.500 46 24.500 45.800 26 44.500 33 40.500 39 39.600 44.800 42 53 47.600 62 47.600 72.500V78.500Q47.600 81.700 44.400 81.700H12.800Q9.600 81.700 9.600 78.500V72.500C9.600 62 15.200 53 17.600 44.800 16.700 39 12.700 33 11.400 26 11.200 24.500 11.200 22.500 13 21.500 17.200 19.300 22.800 17.500 23.300 13.500Z" fill="#f0714a"/>
  <path d="M16.800 56.500L15.900 60.200M15.200 63.800Q13.700 70 13.700 77" fill="none" stroke="#f6c98a" stroke-width="1.400" stroke-linecap="round"/>
  <rect x="13.500" y="84.600" width="29.700" height="2.500" fill="#f0714a"/>
  <rect x="26.700" y="89.600" width="3.400" height="23.400" fill="#f0714a"/>
  <rect x="19.800" y="115" width="17.200" height="2.400" fill="#f0714a"/>
</svg>
<!-- orange line -->
<div class="a" style="left:722.500px;top:366.200px;width:244.500px;height:1.500px;background:#f0714a"></div>
<span class="tx" style="left:720.82px;top:292.95px;font:normal 68.6px/68.6px 'Liberation Serif',serif;color:#f0714a;transform:scaleX(0.8771)">F</span>
<span class="tx" style="left:763.74px;top:292.95px;font:normal 68.6px/68.6px 'Liberation Serif',serif;color:#f0714a;transform:scaleX(0.9622)">L</span>
<span class="tx" style="left:807.14px;top:292.95px;font:normal 68.6px/68.6px 'Liberation Serif',serif;color:#f0714a;transform:scaleX(1.0778)">O</span>
<span class="tx" style="left:870.05px;top:292.95px;font:normal 68.6px/68.6px 'Liberation Serif',serif;color:#f0714a;transform:scaleX(0.9500)">R</span>
<span class="tx" style="left:917.50px;top:292.95px;font:normal 68.6px/68.6px 'Liberation Serif',serif;color:#f0714a;transform:scaleX(0.9060)">A</span>
<!-- selection -->
<svg style="left:0;top:0;z-index:3" width="1280" height="600" viewBox="0 0 1280 600">
  <rect x="718.700" y="293.300" width="269" height="75" fill="none" stroke="#5b63e6" stroke-width="1.800"/>
  <g fill="#fff" stroke="#5b63e6" stroke-width="1.600">
    <circle cx="718.700" cy="293.300" r="4.700"/><circle cx="987.700" cy="293.300" r="4.700"/><circle cx="718.700" cy="368.300" r="4.700"/><circle cx="987.700" cy="368.300" r="4.700"/>
    <rect x="716.300" y="323.600" width="5" height="14.600" rx="2.500"/><rect x="985.300" y="323.600" width="5" height="14.600" rx="2.500"/>
  </g>
  <circle cx="853.600" cy="390.600" r="10.100" fill="#5560e8"/>
  <path d="M849.700 387.900A4.300 4.300 0 1 1 850.100 393.800" fill="none" stroke="#fff" stroke-width="1.500" stroke-linecap="round"/><path d="M848 385.800L848.400 389.500 852 388.700z" fill="#fff"/>
</svg>
<!-- popup -->
<div class="a" style="left:783.500px;top:254px;width:139.400px;height:26.600px;border-radius:4.500px;z-index:3;background:#faf6ec;box-shadow:0 1px 10px 2px rgba(110,70,0,.38)"></div>
<svg style="z-index:4;left:791.500px;top:260px" width="15" height="15" viewBox="0 0 15 15"><path d="M9.800 2.600a2.300 2.300 0 0 1 3.200 3.200L5.600 12.400 1.600 13.600 2.600 9.600z" fill="none" stroke="#222" stroke-width="1.400" stroke-linejoin="round"/><path d="M2.800 9.800l2.600 2.600" stroke="#222" stroke-width="1.200"/><path d="M6.300 1l.5 1.300 1.300.5-1.300.5-.5 1.300-.5-1.300-1.300-.5 1.300-.5z" fill="#222"/><circle cx="2.200" cy="4.500" r=".900" fill="#222"/><circle cx="4.300" cy="6.400" r=".600" fill="#222"/></svg>
<svg style="z-index:4;left:856.500px;top:261.500px" width="12" height="12" viewBox="0 0 12 12"><path d="M5 7a2.600 2.600 0 0 0 3.700 0l1.800-1.800A2.600 2.600 0 0 0 6.800 1.500L6 2.300" fill="none" stroke="#222" stroke-width="1.500" stroke-linecap="round"/><path d="M7 5a2.600 2.600 0 0 0-3.700 0L1.500 6.800a2.600 2.600 0 0 0 3.700 3.700L6 9.700" fill="none" stroke="#222" stroke-width="1.500" stroke-linecap="round"/></svg>
<svg style="z-index:4;left:879px;top:260.300px" width="14" height="14" viewBox="0 0 14 14"><path d="M.800 3.600h12.400M4.700 3.300V2.200A1.200 1.200 0 0 1 5.900 1h2.200A1.200 1.200 0 0 1 9.300 2.200v1.100M2.500 3.800v7.400a2 2 0 0 0 2 2h5a2 2 0 0 0 2-2V3.800" fill="none" stroke="#222" stroke-width="1.500" stroke-linecap="round"/><path d="M5.600 6.400v4.200M8.400 6.400v4.200" stroke="#222" stroke-width="1.400" stroke-linecap="round"/></svg>
<svg style="z-index:4;left:903.500px;top:266px" width="12" height="3" viewBox="0 0 12 3"><circle cx="1.500" cy="1.500" r="1.400" fill="#222"/><circle cx="6" cy="1.500" r="1.400" fill="#222"/><circle cx="10.500" cy="1.500" r="1.400" fill="#222"/></svg>
<!-- right thumbs -->
<div class="a" style="left:1208px;top:111.700px;width:52px;height:52px;border-radius:5px;background:#fff;border:1px solid #dedede;box-shadow:0 0 2px rgba(0,0,0,.08)"></div>
<div class="a" style="left:1214.200px;top:137.700px;width:40.800px;height:1px;background:#f3a88e"></div>
<div class="a" style="left:1208px;top:170.700px;width:52px;height:52px;border-radius:5px;background:#fff;border:1px solid #dedede;box-shadow:0 0 2px rgba(0,0,0,.08)"></div>
<div class="a" style="left:1207.500px;top:228px;width:53px;height:53px;border-radius:5.500px;background:#fff;border:2px solid #222"></div>
<div class="a" style="left:1208.500px;top:287.400px;width:51.300px;height:51px;border-radius:5px;background:#fff;border:1px solid #dedede;box-shadow:0 0 2px rgba(0,0,0,.08)"></div>
<svg style="left:1226px;top:292.500px" width="15.200" height="41.500" viewBox="9 8 39.500 110" preserveAspectRatio="none">
  <path d="M23.300 8.300H34V13.500C34.500 17.500 40 19.300 44.200 21.500 46 22.500 46 24.500 45.800 26 44.500 33 40.500 39 39.600 44.800 42 53 47.600 62 47.600 72.500V78.500Q47.600 81.700 44.400 81.700H12.800Q9.600 81.700 9.600 78.500V72.500C9.600 62 15.200 53 17.600 44.800 16.700 39 12.700 33 11.400 26 11.200 24.500 11.200 22.500 13 21.500 17.200 19.300 22.800 17.500 23.300 13.500Z" fill="#f0714a"/>
  <path d="M15.200 60Q13.700 70 13.700 77" fill="none" stroke="#f6c98a" stroke-width="2.200" stroke-linecap="round"/>
  <rect x="13.500" y="84.600" width="29.700" height="2.800" fill="#f0714a"/>
  <rect x="26.700" y="89.600" width="3.400" height="23.400" fill="#f0714a"/>
  <rect x="19.800" y="114.500" width="17.200" height="2.800" fill="#f0714a"/>
</svg>
<div class="a" style="left:1220.800px;top:351.800px;width:26.800px;height:26.800px;border-radius:14px;background:#fff;box-shadow:0 1px 4px rgba(0,0,0,.12)"></div>
<svg style="left:1229px;top:360px" width="10.500" height="10.500" viewBox="0 0 10 10"><path d="M1 1l8 8M9 1l-8 8" stroke="#222" stroke-width="1.600" stroke-linecap="round"/></svg>


<span class="tx" style="left:63.20px;top:18.73px;font:normal 11.3px/11.3px 'Liberation Sans',sans-serif;color:#fff;transform:scaleX(0.9064);-webkit-text-stroke:.35px;">File</span>
<span class="tx" style="left:107.90px;top:18.83px;font:bold 11.3px/11.3px 'Liberation Sans',sans-serif;color:#fff;transform:scaleX(0.8894);">Untitled - January 21, 2025 at 17.53.23</span>
<span class="tx" style="left:371.50px;top:16.30px;font:bold 13px/13px 'Liberation Sans',sans-serif;color:#fff;transform:scaleX(0.9285);">Start free trial</span>
<span class="tx" style="left:1078.40px;top:16.20px;font:bold 13px/13px 'Liberation Sans',sans-serif;color:#fff;transform:scaleX(0.9274);">Download</span>
<span class="tx" style="left:1180.60px;top:16.20px;font:bold 13px/13px 'Liberation Sans',sans-serif;color:#fff;transform:scaleX(0.8854);">Share</span>
<span class="tx" style="left:16.30px;top:65.71px;font:normal 10.5px/10.5px 'Liberation Sans',sans-serif;color:#292929;transform:scaleX(0.8233);-webkit-text-stroke:.3px;">Search</span>
<span class="tx" style="left:11.00px;top:134.11px;font:normal 10.5px/10.5px 'Liberation Sans',sans-serif;color:#292929;transform:scaleX(0.8676);-webkit-text-stroke:.3px;">Your stuff</span>
<span class="tx" style="left:16.40px;top:188.71px;font:normal 10.5px/10.5px 'Liberation Sans',sans-serif;color:#292929;transform:scaleX(0.8413);-webkit-text-stroke:.3px;">Brands</span>
<span class="tx" style="left:15.60px;top:242.71px;font:normal 10.5px/10.5px 'Liberation Sans',sans-serif;color:#292929;transform:scaleX(0.8834);-webkit-text-stroke:.3px;">Upload</span>
<span class="tx" style="left:9.60px;top:311.41px;font:normal 10.5px/10.5px 'Liberation Sans',sans-serif;color:#292929;transform:scaleX(0.8650);-webkit-text-stroke:.3px;">Templates</span>
<span class="tx" style="left:18.00px;top:365.61px;font:normal 10.5px/10.5px 'Liberation Sans',sans-serif;color:#292929;transform:scaleX(0.8738);-webkit-text-stroke:.3px;">Media</span>
<span class="tx" style="left:22.00px;top:420.11px;font:normal 10.5px/10.5px 'Liberation Sans',sans-serif;color:#292929;transform:scaleX(0.8513);-webkit-text-stroke:.3px;">Text</span>
<span class="tx" style="left:11.35px;top:473.71px;font:normal 10.5px/10.5px 'Liberation Sans',sans-serif;color:#292929;transform:scaleX(0.8611);-webkit-text-stroke:.3px;">Elements</span>
<span class="tx" style="left:8.40px;top:528.71px;font:normal 10.5px/10.5px 'Liberation Sans',sans-serif;color:#292929;transform:scaleX(0.8564);-webkit-text-stroke:.3px;">Charts and</span>
<span class="tx" style="left:20.35px;top:540.51px;font:normal 10.5px/10.5px 'Liberation Sans',sans-serif;color:#292929;transform:scaleX(0.8478);-webkit-text-stroke:.3px;">grids</span>
<span class="tx" style="left:13.70px;top:595.11px;font:normal 10.5px/10.5px 'Liberation Sans',sans-serif;color:#292929;transform:scaleX(0.8438);-webkit-text-stroke:.3px;">Add-ons</span>
<span class="tx" style="left:95.10px;top:68.15px;font:bold 14px/14px 'Liberation Sans',sans-serif;color:#000;transform:scaleX(0.9992);">Elements</span>
<span class="tx" style="left:98.30px;top:104.97px;font:bold 11.5px/11.5px 'Liberation Sans',sans-serif;color:#000;transform:scaleX(0.8978);">All</span>
<span class="tx" style="left:138.80px;top:104.97px;font:normal 11.5px/11.5px 'Liberation Sans',sans-serif;color:#444;transform:scaleX(0.9137);-webkit-text-stroke:.3px;">Design assets</span>
<span class="tx" style="left:231.80px;top:104.97px;font:normal 11.5px/11.5px 'Liberation Sans',sans-serif;color:#444;transform:scaleX(0.9415);-webkit-text-stroke:.3px;">Backgrounds</span>
<span class="tx" style="left:127.80px;top:142.74px;font:normal 12px/12px 'Liberation Sans',sans-serif;color:#222;transform:scaleX(0.8581);-webkit-text-stroke:.3px;">Search all</span>
<span class="tx" style="left:108.70px;top:185.80px;font:bold 13px/13px 'Liberation Sans',sans-serif;color:#111;transform:scaleX(0.9047);">Discover add-ons</span>
<span class="tx" style="left:182.00px;top:217.84px;font:bold 12px/12px 'Liberation Sans',sans-serif;color:#111;transform:scaleX(0.8459);">Auto Icon</span>
<span class="tx" style="left:182.00px;top:234.31px;font:normal 10.5px/10.5px 'Liberation Sans',sans-serif;color:#222;transform:scaleX(0.8573);-webkit-text-stroke:.3px;">Access over 160k high-quality</span>
<span class="tx" style="left:182.00px;top:247.11px;font:normal 10.5px/10.5px 'Liberation Sans',sans-serif;color:#222;transform:scaleX(0.8729);-webkit-text-stroke:.3px;">icons</span>
<span class="tx" style="left:95.00px;top:300.50px;font:bold 13px/13px 'Liberation Sans',sans-serif;color:#000;transform:scaleX(0.8809);">Design Assets</span>
<span class="tx" style="left:95.00px;top:433.20px;font:bold 13px/13px 'Liberation Sans',sans-serif;color:#000;transform:scaleX(0.8943);">Backgrounds</span>
<span class="tx" style="left:95.00px;top:540.50px;font:bold 13px/13px 'Liberation Sans',sans-serif;color:#000;transform:scaleX(0.8757);">Shapes</span>
<span class="tx" style="left:276.80px;top:302.96px;font:bold 9.5px/9.5px 'Liberation Sans',sans-serif;color:#4046ca;transform:scaleX(0.8908);">View all</span>
<span class="tx" style="left:276.80px;top:435.76px;font:bold 9.5px/9.5px 'Liberation Sans',sans-serif;color:#4046ca;transform:scaleX(0.8908);">View all</span>
<span class="tx" style="left:276.80px;top:542.96px;font:bold 9.5px/9.5px 'Liberation Sans',sans-serif;color:#4046ca;transform:scaleX(0.8908);">View all</span>
<span class="tx" style="left:1068.50px;top:62.69px;font:bold 11px/11px 'Liberation Sans',sans-serif;color:#222;transform:scaleX(1.0213);">94%</span>
<span class="tx" style="left:615.00px;top:127.67px;font:bold 11.5px/11.5px 'Liberation Sans',sans-serif;color:#222;transform:scaleX(0.8270);">Page 1 / 1 -</span>
<span class="tx" style="left:667.90px;top:127.67px;font:normal 11.5px/11.5px 'Liberation Sans',sans-serif;color:#222;transform:scaleX(0.9528);-webkit-text-stroke:.3px;">Add title</span>
<span class="tx" style="left:811.60px;top:262.76px;font:normal 9.5px/9.5px 'Liberation Sans',sans-serif;color:#222;transform:scaleX(0.9689);z-index:4;-webkit-text-stroke:.3px;">Rewrite</span>
<span class="tx" style="left:724.60px;top:381.52px;font:normal 18.6px/18.6px 'Liberation Serif',serif;color:#f0714a;transform:scaleX(1.0000);letter-spacing:2.712px;">FASHION &amp; <span style="visibility:hidden">B</span>OUTIQUE</span>
<span class="tx" style="left:1214.60px;top:249.55px;font:normal 12px/12px 'Liberation Serif',serif;color:#f0714a;transform:scaleX(1.0000);letter-spacing:0.214px;">FLORA</span>
<span class="tx" style="left:1214.20px;top:194.62px;font:normal 3.2px/3.2px 'Liberation Serif',serif;color:#f0714a;transform:scaleX(1.0000);letter-spacing:0.403px;">FASHION &amp; BOUTIQUE</span>
</body></html>
